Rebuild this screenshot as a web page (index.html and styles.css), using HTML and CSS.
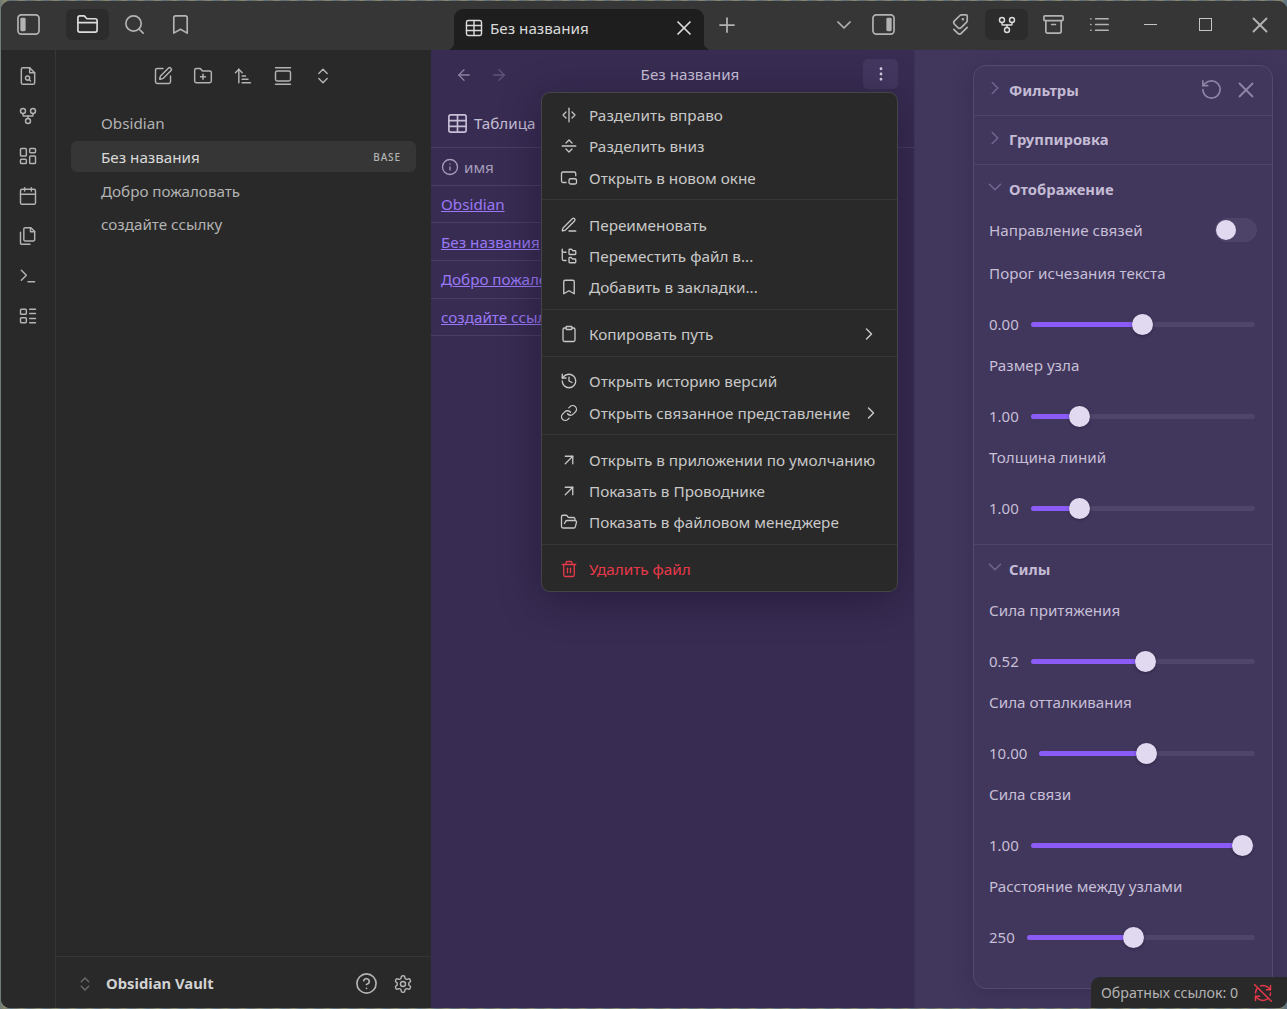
FILE: index.html
```html
<!DOCTYPE html>
<html>
<head>
	<meta charset="utf-8">
	<meta name="viewport" content="width=device-width, initial-scale=1">
	<title>Без названия - Obsidian Vault</title>
	<link rel="stylesheet" href="styles.css">
</head>
<body>
<svg class="defs" width="0" height="0">
	<symbol id="i-side-l" viewBox="0 0 24 24"><rect x="1" y="2" width="22" height="20" rx="3.5"/><rect x="3.5" y="5" width="5.5" height="14" rx="1.5" fill="currentColor" stroke="none"/></symbol>
	<symbol id="i-side-r" viewBox="0 0 24 24"><rect x="1" y="2" width="22" height="20" rx="3.5"/><rect x="15" y="5" width="5.5" height="14" rx="1.5" fill="currentColor" stroke="none"/></symbol>
	<symbol id="i-folder" viewBox="0 0 24 24"><path d="M20 20a2 2 0 0 0 2-2V8a2 2 0 0 0-2-2h-7.9a2 2 0 0 1-1.69-.9L9.6 3.9A2 2 0 0 0 7.93 3H4a2 2 0 0 0-2 2v13a2 2 0 0 0 2 2Z"/><path d="M2 10h20"/></symbol>
	<symbol id="i-search" viewBox="0 0 24 24"><circle cx="11" cy="11" r="8"/><path d="m21 21-4.3-4.3"/></symbol>
	<symbol id="i-bookmark" viewBox="0 0 24 24"><path d="m19 21-7-4-7 4V5a2 2 0 0 1 2-2h10a2 2 0 0 1 2 2v16z"/></symbol>
	<symbol id="i-file-search" viewBox="0 0 24 24"><path d="M14 2H6a2 2 0 0 0-2 2v16a2 2 0 0 0 2 2h12a2 2 0 0 0 2-2V8z"/><path d="M14 2v6h6"/><circle cx="11.5" cy="14.5" r="2.5"/><path d="M13.3 16.3 15 18"/></symbol>
	<symbol id="i-graph" viewBox="0 0 24 24"><circle cx="12" cy="18" r="3"/><circle cx="6" cy="6" r="3"/><circle cx="18" cy="6" r="3"/><path d="M18 9v2c0 .6-.4 1-1 1H7c-.6 0-1-.4-1-1V9"/><path d="M12 12v3"/></symbol>
	<symbol id="i-dash" viewBox="0 0 24 24"><rect x="3" y="3" width="7" height="9" rx="1"/><rect x="14" y="3" width="7" height="5" rx="1"/><rect x="14" y="12" width="7" height="9" rx="1"/><rect x="3" y="16" width="7" height="5" rx="1"/></symbol>
	<symbol id="i-calendar" viewBox="0 0 24 24"><path d="M8 2v4"/><path d="M16 2v4"/><rect x="3" y="4" width="18" height="18" rx="2"/><path d="M3 10h18"/></symbol>
	<symbol id="i-files" viewBox="0 0 24 24"><path d="M15.5 2H8.6c-.4 0-.8.2-1.1.5-.3.3-.5.7-.5 1.1v12.8c0 .4.2.8.5 1.1.3.3.7.5 1.1.5h9.8c.4 0 .8-.2 1.1-.5.3-.3.5-.7.5-1.1V6.5L15.5 2z"/><path d="M3 7.6v12.8c0 .4.2.8.5 1.1.3.3.7.5 1.1.5h9.8"/><path d="M15 2v5h5"/></symbol>
	<symbol id="i-terminal" viewBox="0 0 24 24"><path d="m4 17 6-6-6-6"/><path d="M12 19h8"/></symbol>
	<symbol id="i-tasks" viewBox="0 0 24 24"><rect x="3" y="4" width="7" height="6" rx="1"/><rect x="3" y="14" width="7" height="6" rx="1"/><path d="M14 4h7"/><path d="M14 9h7"/><path d="M14 15h7"/><path d="M14 20h7"/></symbol>
	<symbol id="i-edit" viewBox="0 0 24 24"><path d="M12 3H5a2 2 0 0 0-2 2v14a2 2 0 0 0 2 2h14a2 2 0 0 0 2-2v-7"/><path d="M18.375 2.625a1 1 0 0 1 3 3l-9.013 9.014a2 2 0 0 1-.853.505l-2.873.84a.5.5 0 0 1-.62-.62l.84-2.873a2 2 0 0 1 .506-.852z"/></symbol>
	<symbol id="i-folder-plus" viewBox="0 0 24 24"><path d="M20 20a2 2 0 0 0 2-2V8a2 2 0 0 0-2-2h-7.9a2 2 0 0 1-1.69-.9L9.6 3.9A2 2 0 0 0 7.93 3H4a2 2 0 0 0-2 2v13a2 2 0 0 0 2 2Z"/><path d="M12 10v6"/><path d="M9 13h6"/></symbol>
	<symbol id="i-sort" viewBox="0 0 24 24"><path d="m3 8 4-4 4 4"/><path d="M7 4v16"/><path d="M11 12h4"/><path d="M11 16h7"/><path d="M11 20h10"/></symbol>
	<symbol id="i-gallery" viewBox="0 0 24 24"><path d="M3 2h18"/><rect x="3" y="6" width="18" height="12" rx="2"/><path d="M3 22h18"/></symbol>
	<symbol id="i-updown" viewBox="0 0 24 24"><path d="m7 15 5 5 5-5"/><path d="m7 9 5-5 5 5"/></symbol>
	<symbol id="i-table" viewBox="0 0 24 24"><rect x="3" y="3" width="18" height="18" rx="2"/><path d="M3 9h18"/><path d="M3 15h18"/><path d="M12 3v18"/></symbol>
	<symbol id="i-x" viewBox="0 0 24 24"><path d="M18 6 6 18"/><path d="m6 6 12 12"/></symbol>
	<symbol id="i-plus" viewBox="0 0 24 24"><path d="M5 12h14"/><path d="M12 5v14"/></symbol>
	<symbol id="i-down" viewBox="0 0 24 24"><path d="m6 9 6 6 6-6"/></symbol>
	<symbol id="i-right" viewBox="0 0 24 24"><path d="m9 18 6-6-6-6"/></symbol>
	<symbol id="i-tags" viewBox="0 0 24 24"><g transform="rotate(90 12 12)"><path d="m15 5 6.3 6.3a2.4 2.4 0 0 1 0 3.4L17 19"/><path d="M9.586 5.586A2 2 0 0 0 8.172 5H3a1 1 0 0 0-1 1v5.172a2 2 0 0 0 .586 1.414L8.29 18.29a2.426 2.426 0 0 0 3.42 0l3.58-3.58a2.426 2.426 0 0 0 0-3.42z"/><circle cx="6.5" cy="9.5" r=".5" fill="currentColor"/></g></symbol>
	<symbol id="i-archive" viewBox="0 0 24 24"><rect x="2" y="3" width="20" height="5" rx="1"/><path d="M4 8v11a2 2 0 0 0 2 2h12a2 2 0 0 0 2-2V8"/><path d="M10 12h4"/></symbol>
	<symbol id="i-list" viewBox="0 0 24 24"><path d="M3 12h.01"/><path d="M3 18h.01"/><path d="M3 6h.01"/><path d="M8 12h13"/><path d="M8 18h13"/><path d="M8 6h13"/></symbol>
	<symbol id="i-back" viewBox="0 0 24 24"><path d="m12 19-7-7 7-7"/><path d="M19 12H5"/></symbol>
	<symbol id="i-forward" viewBox="0 0 24 24"><path d="M5 12h14"/><path d="m12 5 7 7-7 7"/></symbol>
	<symbol id="i-more" viewBox="0 0 24 24"><circle cx="12" cy="12" r="1" fill="currentColor"/><circle cx="12" cy="5" r="1" fill="currentColor"/><circle cx="12" cy="19" r="1" fill="currentColor"/></symbol>
	<symbol id="i-info" viewBox="0 0 24 24"><circle cx="12" cy="12" r="10"/><path d="M12 16v-4"/><path d="M12 8h.01"/></symbol>
	<symbol id="i-split-v" viewBox="0 0 24 24"><path d="M12 3v18"/><path d="m16 16 4-4-4-4"/><path d="m8 8-4 4 4 4"/></symbol>
	<symbol id="i-split-h" viewBox="0 0 24 24"><path d="M3 12h18"/><path d="m8 8 4-4 4 4"/><path d="m16 16-4 4-4-4"/></symbol>
	<symbol id="i-window" viewBox="0 0 24 24"><path d="M21 9V6a2 2 0 0 0-2-2H4a2 2 0 0 0-2 2v10c0 1.1.9 2 2 2h4"/><rect x="12" y="13" width="10" height="7" rx="2"/></symbol>
	<symbol id="i-pen" viewBox="0 0 24 24"><path d="M12 20h9"/><path d="M16.376 3.622a1 1 0 0 1 3.002 3.002L7.368 18.635a2 2 0 0 1-.855.506l-2.872.838a.5.5 0 0 1-.62-.62l.838-2.872a2 2 0 0 1 .506-.854z"/></symbol>
	<symbol id="i-tree" viewBox="0 0 24 24"><path d="M20 10a1 1 0 0 0 1-1V6a1 1 0 0 0-1-1h-2.5a1 1 0 0 1-.8-.4l-.9-1.2A1 1 0 0 0 15 3h-2a1 1 0 0 0-1 1v5a1 1 0 0 0 1 1Z"/><path d="M20 21a1 1 0 0 0 1-1v-3a1 1 0 0 0-1-1h-2.9a1 1 0 0 1-.88-.55l-.42-.85a1 1 0 0 0-.92-.6H13a1 1 0 0 0-1 1v5a1 1 0 0 0 1 1Z"/><path d="M3 5a2 2 0 0 0 2 2h3"/><path d="M3 3v13a2 2 0 0 0 2 2h3"/></symbol>
	<symbol id="i-clipboard" viewBox="0 0 24 24"><rect x="8" y="2" width="8" height="4" rx="1"/><path d="M16 4h2a2 2 0 0 1 2 2v14a2 2 0 0 1-2 2H6a2 2 0 0 1-2-2V6a2 2 0 0 1 2-2h2"/></symbol>
	<symbol id="i-history" viewBox="0 0 24 24"><path d="M3 12a9 9 0 1 0 9-9 9.75 9.75 0 0 0-6.74 2.74L3 8"/><path d="M3 3v5h5"/><path d="M12 7v5l4 2"/></symbol>
	<symbol id="i-link" viewBox="0 0 24 24"><path d="M10 13a5 5 0 0 0 7.54.54l3-3a5 5 0 0 0-7.07-7.07l-1.72 1.71"/><path d="M14 11a5 5 0 0 0-7.54-.54l-3 3a5 5 0 0 0 7.07 7.07l1.71-1.71"/></symbol>
	<symbol id="i-arrow-ur" viewBox="0 0 24 24"><path d="M7 7h10v10"/><path d="M7 17 17 7"/></symbol>
	<symbol id="i-folder-open" viewBox="0 0 24 24"><path d="m6 14 1.5-2.9A2 2 0 0 1 9.24 10H20a2 2 0 0 1 1.94 2.5l-1.54 6a2 2 0 0 1-1.95 1.5H4a2 2 0 0 1-2-2V5a2 2 0 0 1 2-2h3.9a2 2 0 0 1 1.69.9l.81 1.2a2 2 0 0 0 1.67.9H18a2 2 0 0 1 2 2v2"/></symbol>
	<symbol id="i-trash" viewBox="0 0 24 24"><path d="M3 6h18"/><path d="M19 6v14c0 1-1 2-2 2H7c-1 0-2-1-2-2V6"/><path d="M8 6V4c0-1 1-2 2-2h4c1 0 2 1 2 2v2"/><path d="M10 11v6"/><path d="M14 11v6"/></symbol>
	<symbol id="i-reset" viewBox="0 0 24 24"><path d="M3 12a9 9 0 1 0 9-9 9.75 9.75 0 0 0-6.74 2.74L3 8"/><path d="M3 3v5h5"/></symbol>
	<symbol id="i-help" viewBox="0 0 24 24"><circle cx="12" cy="12" r="10"/><path d="M9.09 9a3 3 0 0 1 5.83 1c0 2-3 3-3 3"/><path d="M12 17h.01"/></symbol>
	<symbol id="i-gear" viewBox="0 0 24 24"><path d="M12.22 2h-.44a2 2 0 0 0-2 2v.18a2 2 0 0 1-1 1.73l-.43.25a2 2 0 0 1-2 0l-.15-.08a2 2 0 0 0-2.73.73l-.22.38a2 2 0 0 0 .73 2.73l.15.1a2 2 0 0 1 1 1.72v.51a2 2 0 0 1-1 1.74l-.15.09a2 2 0 0 0-.73 2.73l.22.38a2 2 0 0 0 2.73.73l.15-.08a2 2 0 0 1 2 0l.43.25a2 2 0 0 1 1 1.73V20a2 2 0 0 0 2 2h.44a2 2 0 0 0 2-2v-.18a2 2 0 0 1 1-1.73l.43-.25a2 2 0 0 1 2 0l.15.08a2 2 0 0 0 2.73-.73l.22-.39a2 2 0 0 0-.73-2.73l-.15-.08a2 2 0 0 1-1-1.74v-.5a2 2 0 0 1 1-1.74l.15-.09a2 2 0 0 0 .73-2.73l-.22-.38a2 2 0 0 0-2.73-.73l-.15.08a2 2 0 0 1-2 0l-.43-.25a2 2 0 0 1-1-1.73V4a2 2 0 0 0-2-2z"/><circle cx="12" cy="12" r="3"/></symbol>
	<symbol id="i-sync-off" viewBox="0 0 24 24"><path d="M21 8L18.74 5.74A9.75 9.75 0 0 0 12 3C11 3 10.03 3.16 9.13 3.47"/><path d="M8 16H3v5"/><path d="M3 12C3 9.51 4 7.26 5.64 5.64"/><path d="m3 16 2.26 2.26A9.75 9.75 0 0 0 12 21c2.49 0 4.74-1 6.36-2.64"/><path d="M21 12c0 1-.16 1.97-.47 2.87"/><path d="M21 3v5h-5"/><path d="M22 22 2 2"/></symbol>
</svg>

<div class="window">
	<header class="titlebar">
		<button class="tb-btn first"><svg class="ic ic-22"><use href="#i-side-l"/></svg></button>
		<div class="tb-group left-tabs">
			<button class="tb-btn active"><svg class="ic ic-22"><use href="#i-folder"/></svg></button>
			<button class="tb-btn"><svg class="ic ic-22"><use href="#i-search"/></svg></button>
			<button class="tb-btn"><svg class="ic ic-22"><use href="#i-bookmark"/></svg></button>
		</div>
		<div class="tab">
			<svg class="ic ic-20"><use href="#i-table"/></svg>
			<span class="tab-name">Без названия</span>
			<svg class="ic ic-24"><use href="#i-x"/></svg>
		</div>
		<button class="tb-btn new-tab"><svg class="ic ic-24"><use href="#i-plus"/></svg></button>
		<button class="tb-btn narrow tab-list"><svg class="ic ic-24"><use href="#i-down"/></svg></button>
		<button class="tb-btn narrow"><svg class="ic ic-22"><use href="#i-side-r"/></svg></button>
		<div class="tb-group right-tabs">
			<button class="tb-btn"><svg class="ic ic-22"><use href="#i-tags"/></svg></button>
			<button class="tb-btn active"><svg class="ic ic-20"><use href="#i-graph"/></svg></button>
			<button class="tb-btn"><svg class="ic ic-22"><use href="#i-archive"/></svg></button>
			<button class="tb-btn"><svg class="ic ic-22"><use href="#i-list"/></svg></button>
		</div>
		<div class="win-controls">
			<button class="win-btn"><span class="win-min"></span></button>
			<button class="win-btn"><span class="win-max"></span></button>
			<button class="win-btn"><svg class="ic ic-26"><use href="#i-x"/></svg></button>
		</div>
	</header>

	<div class="workspace">
		<nav class="ribbon">
			<svg class="ic ic-20"><use href="#i-file-search"/></svg>
			<svg class="ic ic-20"><use href="#i-graph"/></svg>
			<svg class="ic ic-20"><use href="#i-dash"/></svg>
			<svg class="ic ic-20"><use href="#i-calendar"/></svg>
			<svg class="ic ic-20"><use href="#i-files"/></svg>
			<svg class="ic ic-20"><use href="#i-terminal"/></svg>
			<svg class="ic ic-20"><use href="#i-tasks"/></svg>
		</nav>

		<aside class="sidebar">
			<div class="file-tools">
				<svg class="ic ic-20"><use href="#i-edit"/></svg>
				<svg class="ic ic-20"><use href="#i-folder-plus"/></svg>
				<svg class="ic ic-20"><use href="#i-sort"/></svg>
				<svg class="ic ic-20"><use href="#i-gallery"/></svg>
				<svg class="ic ic-20"><use href="#i-updown"/></svg>
			</div>
			<ul class="files">
				<li class="file">Obsidian</li>
				<li class="file current">Без названия <span class="file-tag">BASE</span></li>
				<li class="file">Добро пожаловать</li>
				<li class="file">создайте ссылку</li>
			</ul>
			<footer class="vault">
				<svg class="ic ic-18 vault-switch"><use href="#i-updown"/></svg>
				<span class="vault-name">Obsidian Vault</span>
				<svg class="ic ic-22 vault-help"><use href="#i-help"/></svg>
				<svg class="ic ic-20 vault-gear"><use href="#i-gear"/></svg>
			</footer>
		</aside>

		<main class="center">
			<div class="view-head">
				<svg class="ic ic-18 nav-back"><use href="#i-back"/></svg>
				<svg class="ic ic-18 nav-forward"><use href="#i-forward"/></svg>
				<span class="view-title">Без названия</span>
				<button class="view-more"><svg class="ic ic-18"><use href="#i-more"/></svg></button>
			</div>
			<div class="base-tools">
				<svg class="ic ic-table"><use href="#i-table"/></svg>
				<span>Таблица</span>
			</div>
			<div class="table">
				<div class="row row-head"><svg class="ic ic-18"><use href="#i-info"/></svg> имя</div>
				<div class="row"><a class="link">Obsidian</a></div>
				<div class="row"><a class="link">Без названия</a></div>
				<div class="row"><a class="link">Добро пожаловать</a></div>
				<div class="row"><a class="link">создайте ссылку</a></div>
			</div>

			<div class="menu">
				<div class="menu-item"><svg class="ic ic-18"><use href="#i-split-v"/></svg>Разделить вправо</div>
				<div class="menu-item"><svg class="ic ic-18"><use href="#i-split-h"/></svg>Разделить вниз</div>
				<div class="menu-item"><svg class="ic ic-18"><use href="#i-window"/></svg>Открыть в новом окне</div>
				<div class="menu-sep"></div>
				<div class="menu-item"><svg class="ic ic-18"><use href="#i-pen"/></svg>Переименовать</div>
				<div class="menu-item"><svg class="ic ic-18"><use href="#i-tree"/></svg>Переместить файл в...</div>
				<div class="menu-item"><svg class="ic ic-18"><use href="#i-bookmark"/></svg>Добавить в закладки...</div>
				<div class="menu-sep"></div>
				<div class="menu-item"><svg class="ic ic-18"><use href="#i-clipboard"/></svg>Копировать путь<svg class="ic ic-20 menu-arrow"><use href="#i-right"/></svg></div>
				<div class="menu-sep"></div>
				<div class="menu-item"><svg class="ic ic-18"><use href="#i-history"/></svg>Открыть историю версий</div>
				<div class="menu-item"><svg class="ic ic-18"><use href="#i-link"/></svg>Открыть связанное представление<svg class="ic ic-20 menu-arrow"><use href="#i-right"/></svg></div>
				<div class="menu-sep"></div>
				<div class="menu-item"><svg class="ic ic-18"><use href="#i-arrow-ur"/></svg>Открыть в приложении по умолчанию</div>
				<div class="menu-item"><svg class="ic ic-18"><use href="#i-arrow-ur"/></svg>Показать в Проводнике</div>
				<div class="menu-item"><svg class="ic ic-18"><use href="#i-folder-open"/></svg>Показать в файловом менеджере</div>
				<div class="menu-sep"></div>
				<div class="menu-item danger"><svg class="ic ic-18"><use href="#i-trash"/></svg>Удалить файл</div>
			</div>
		</main>

		<section class="graph-pane">
			<div class="panel">
				<div class="panel-head border first-head">
					<svg class="ic caret"><use href="#i-right"/></svg>
					<span class="panel-title">Фильтры</span>
					<svg class="ic ic-22 panel-reset"><use href="#i-reset"/></svg>
					<svg class="ic ic-26 panel-close"><use href="#i-x"/></svg>
				</div>
				<div class="panel-head border">
					<svg class="ic caret"><use href="#i-right"/></svg>
					<span class="panel-title">Группировка</span>
				</div>
				<div class="panel-head">
					<svg class="ic caret"><use href="#i-down"/></svg>
					<span class="panel-title">Отображение</span>
				</div>
				<div class="panel-body border">
					<div class="toggle-row">
						<span>Направление связей</span>
						<span class="toggle"><span class="toggle-knob"></span></span>
					</div>
					<div class="label gap-21">Порог исчезания текста</div>
					<div class="slider"><span class="value">0.00</span><div class="track"><div class="fill" style="width:50%"></div><span class="thumb"></span></div></div>
					<div class="label">Размер узла</div>
					<div class="slider"><span class="value">1.00</span><div class="track"><div class="fill" style="width:21.8%"></div><span class="thumb"></span></div></div>
					<div class="label">Толщина линий</div>
					<div class="slider"><span class="value">1.00</span><div class="track"><div class="fill" style="width:21.8%"></div><span class="thumb"></span></div></div>
				</div>
				<div class="panel-head">
					<svg class="ic caret"><use href="#i-down"/></svg>
					<span class="panel-title">Силы</span>
				</div>
				<div class="panel-body forces">
					<div class="label">Сила притяжения</div>
					<div class="slider"><span class="value">0.52</span><div class="track"><div class="fill" style="width:51.3%"></div><span class="thumb"></span></div></div>
					<div class="label">Сила отталкивания</div>
					<div class="slider"><span class="value">10.00</span><div class="track"><div class="fill" style="width:49.8%"></div><span class="thumb"></span></div></div>
					<div class="label">Сила связи</div>
					<div class="slider"><span class="value">1.00</span><div class="track"><div class="fill" style="width:94.6%"></div><span class="thumb"></span></div></div>
					<div class="label">Расстояние между узлами</div>
					<div class="slider"><span class="value">250</span><div class="track"><div class="fill" style="width:46.7%"></div><span class="thumb"></span></div></div>
				</div>
			</div>
		</section>
	</div>

	<div class="status">
		<span>Обратных ссылок: 0</span>
		<svg class="ic ic-20 status-off"><use href="#i-sync-off"/></svg>
	</div>
</div>
</body>
</html>
```

FILE: styles.css
```css
* { box-sizing: border-box; }

html, body { height: 100%; }

body {
	margin: 0;
	overflow: hidden;
	font-family: "Noto Sans", "Open Sans", sans-serif;
	font-size: 15.2px;
	background: repeating-linear-gradient(90deg, #6d7a78 0, #8b8a6c 5px, #5b7182 11px, #76705f 17px);
}

.defs { position: absolute; }

button {
	border: 0;
	padding: 0;
	background: none;
	color: inherit;
	font: inherit;
}

ul { margin: 0; padding: 0; list-style: none; }

/* icons */
.ic {
	display: block;
	flex: none;
	fill: none;
	stroke: currentColor;
	stroke-width: 1.75;
	stroke-linecap: round;
	stroke-linejoin: round;
}
.ic-18 { width: 18px; height: 18px; }
.ic-20 { width: 20px; height: 20px; }
.ic-22 { width: 23px; height: 23px; }
.ic-24 { width: 24px; height: 24px; }
.ic-26 { width: 26px; height: 26px; }
.ic-table { width: 23px; height: 23px; }

/* window */
.window {
	position: relative;
	display: flex;
	flex-direction: column;
	width: 1286px;
	height: 1007px;
	margin: 1px 0 0 1px;
	border-radius: 9px;
	overflow: hidden;
	background: #292929;
}

/* title bar */
.titlebar {
	display: flex;
	flex: none;
	align-items: flex-start;
	height: 49px;
	padding: 8px 0 0 6px;
	background: #363636;
	color: #b3b3b3;
}
.tb-group { display: flex; }
.tb-btn {
	display: flex;
	flex: none;
	align-items: center;
	justify-content: center;
	width: 43px;
	height: 31px;
	border-radius: 6px;
}
.tb-btn.active { background: #2c2c2c; color: #dcdcdc; }
.tb-btn.narrow { width: 40px; }
.left-tabs { gap: 3.5px; margin-left: 16px; }
.right-tabs { gap: 3.5px; margin-left: 35px; }
.new-tab { margin-left: 1.5px; }
.tab-list { margin-left: 75px; }

.tab {
	position: relative;
	display: flex;
	flex: none;
	align-items: center;
	width: 250px;
	height: 41px;
	margin-left: 252px;
	padding: 0 8px 4px 10px;
	border-radius: 9px 9px 0 0;
	background: #1e1e1e;
	color: #dadada;
}
.tab::before, .tab::after {
	content: "";
	position: absolute;
	bottom: 0;
	width: 8px;
	height: 8px;
}
.tab::before { left: -8px; background: radial-gradient(circle at 0 0, transparent 8px, #1e1e1e 8.5px); }
.tab::after { right: -8px; background: radial-gradient(circle at 100% 0, transparent 8px, #1e1e1e 8.5px); }
.tab-name { margin-left: 6px; flex: 1; }

.win-controls { display: flex; margin-left: 1.5px; }
.win-btn {
	display: flex;
	align-items: center;
	justify-content: center;
	width: 55px;
	height: 31px;
}
.win-min { width: 13px; height: 1.5px; background: #c4c4c4; }
.win-max { width: 13px; height: 13px; border: 1.5px solid #c4c4c4; }

.workspace { display: flex; flex: 1; min-height: 0; }

/* ribbon */
.ribbon {
	display: flex;
	flex: none;
	flex-direction: column;
	align-items: center;
	gap: 20px;
	width: 55px;
	padding-top: 16px;
	padding-right: 1px;
	border-right: 1px solid #363636;
	background: #292929;
	color: #b3b3b3;
}

/* file explorer */
.sidebar {
	display: flex;
	flex: none;
	flex-direction: column;
	width: 375px;
	background: #292929;
	color: #b3b3b3;
}
.file-tools {
	display: flex;
	flex: none;
	justify-content: center;
	gap: 20px;
	height: 56.5px;
	padding-top: 16px;
	padding-right: 2px;
}
.files { flex: 1; padding: 0 15px; }
.file {
	display: flex;
	align-items: center;
	height: 33.7px;
	padding-left: 30px;
	padding-right: 15px;
	border-radius: 6px;
}
.file.current {
	height: 31px;
	margin: 1.3px 0 1.4px;
	background: #363636;
	color: #dadada;
}
.file-tag {
	margin-left: auto;
	font-size: 10px;
	font-weight: 500;
	letter-spacing: 0.9px;
	color: #b3b3b3;
}
.vault {
	display: flex;
	flex: none;
	align-items: center;
	height: 52px;
	padding: 2px 0 0 20px;
	border-top: 1px solid #363636;
}
.vault-switch { color: #6f6f6f; }
.vault-name { margin: -2px 0 0 12px; font-size: 14.8px; font-weight: 700; color: #d2d2d2; }
.vault-help { margin-left: auto; }
.vault-gear { margin: 0 18px 0 15px; }

/* center pane */
.center {
	position: relative;
	flex: none;
	width: 483px;
	background: #382c52;
	color: #c6bfd6;
	overflow: hidden;
}
.view-head {
	display: flex;
	align-items: center;
	height: 49px;
	padding: 0 16px 0 24px;
}
.nav-back { color: #8a82a0; }
.nav-forward { margin-left: 17px; color: #5f5479; }
.view-title { flex: 1; padding: 0 0 2px 9px; text-align: center; }
.view-more {
	display: flex;
	align-items: center;
	justify-content: center;
	width: 35px;
	height: 30px;
	margin-top: -2px;
	border-radius: 5px;
	background: #43375f;
	color: #d4cde2;
}
.base-tools {
	display: flex;
	align-items: center;
	gap: 5px;
	height: 49px;
	padding-left: 15px;
	border-bottom: 1px solid #4a3f66;
}
.table { width: 300px; }
.row {
	display: flex;
	align-items: center;
	height: 37.67px;
	padding-left: 10px;
	border-bottom: 1px solid #4a3f66;
	white-space: nowrap;
}
.row-head { gap: 5px; padding-top: 1px; color: #a69eba; }
.link { color: #9a79f6; text-decoration: underline; }

/* context menu */
.menu {
	position: absolute;
	left: 110px;
	top: 42px;
	width: 357px;
	padding: 6.4px 0 5.6px;
	border: 1px solid #454545;
	border-radius: 9px;
	background: #292929;
	color: #c8c8c8;
	font-size: 15.3px;
	box-shadow: 0 8px 40px rgba(20, 12, 40, 0.45);
}
.menu-item {
	display: flex;
	align-items: center;
	gap: 11px;
	height: 31.33px;
	padding-left: 18px;
	white-space: nowrap;
}
.menu-arrow { margin-left: auto; margin-right: 18px; }
.danger { color: #e8394a; }
.menu-sep { height: 1px; margin: 6px 0 8.67px; background: #363636; }

/* graph settings */
.graph-pane {
	flex: 1;
	padding: 15px 14px 19px 59px;
	background: #41365c;
	color: #c6bfd6;
	box-shadow: inset 1px 0 0 #3c3157;
}
.panel {
	height: 100%;
	border: 1px solid #54496f;
	border-radius: 13px;
	background: #41365c;
	box-shadow: 0 4px 20px rgba(40, 28, 70, 0.35);
}
.panel-head {
	display: flex;
	align-items: center;
	height: 49px;
	padding: 0 13px 2px 10px;
}
.panel-head.first-head { height: 50px; }
.panel-head.border { border-bottom: 1px solid #4e4369; }
.caret { width: 22px; height: 22px; margin-top: -3px; color: #6f6590; }
.panel-title { margin-left: 3px; font-size: 14.8px; font-weight: 700; color: #c4bcd4; }
.panel-reset { margin-left: auto; color: #8d84a6; }
.panel-close { margin-left: 10px; color: #8d84a6; }

.panel-body { padding: 0 17px 0 15px; }
.panel-body.border { padding-bottom: 24px; border-bottom: 1px solid #4e4369; }
.panel-body.forces .label:first-child { margin-top: 6px; }

.toggle-row {
	display: flex;
	align-items: center;
	justify-content: space-between;
	height: 24px;
	margin-top: 4px;
}
.toggle {
	display: flex;
	align-items: center;
	width: 42px;
	height: 24px;
	margin-right: -2px;
	padding-left: 1px;
	border-radius: 12px;
	background: #4d4268;
}
.toggle-knob {
	width: 20px;
	height: 20px;
	border-radius: 50%;
	background: #e0d9ef;
}
.label {
	display: flex;
	align-items: center;
	height: 20px;
	margin-top: 19px;
}
.label.gap-21 { margin-top: 21px; }
.slider {
	display: flex;
	align-items: center;
	gap: 12px;
	height: 24px;
	margin-top: 29px;
}
.value { flex: none; font-size: 15px; }
.track {
	display: flex;
	flex: 1;
	align-items: center;
	height: 5px;
	border-radius: 3px;
	background: #4f4469;
}
.fill { height: 100%; border-radius: 3px; background: #8a5cf5; }
.thumb {
	flex: none;
	width: 21px;
	height: 21px;
	margin-left: -10.5px;
	border-radius: 50%;
	background: #e0d9ef;
	box-shadow: 0 1px 3px rgba(20, 12, 40, 0.4);
}

/* status bar */
.status {
	position: absolute;
	right: 0;
	bottom: 0;
	display: flex;
	align-items: center;
	width: 196px;
	height: 31px;
	padding-left: 10px;
	border-top-left-radius: 9px;
	background: #292929;
	color: #b3b3b3;
	font-size: 14.2px;
}
.status-off { margin-left: auto; margin-right: 14px; color: #e8394a; }
```
